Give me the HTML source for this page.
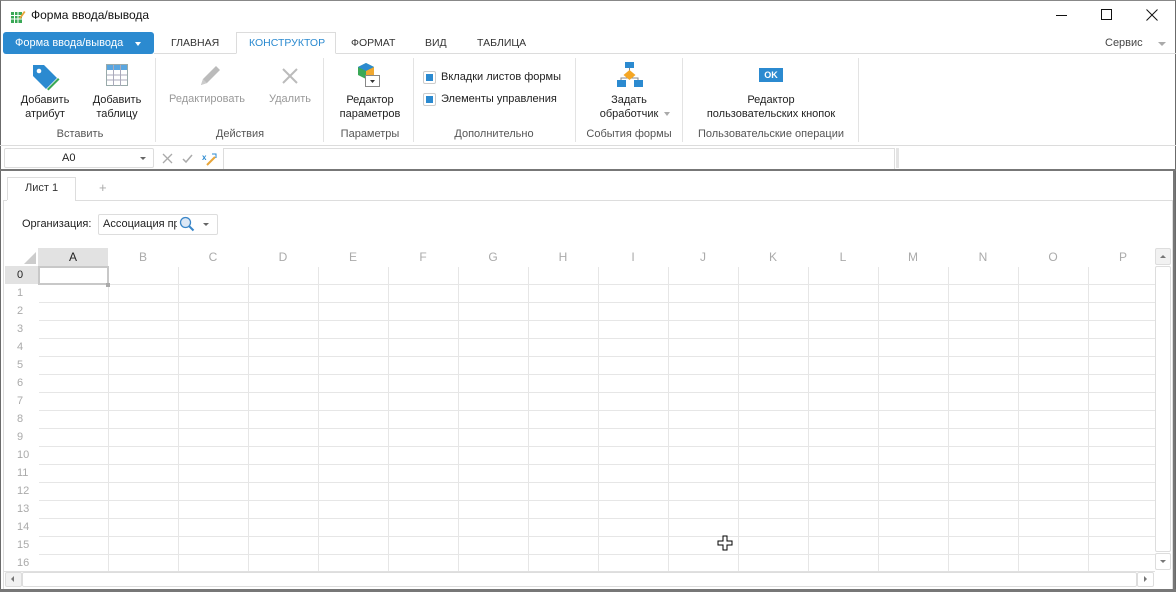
<!DOCTYPE html>
<html><head><meta charset="utf-8"><style>
*{box-sizing:border-box;margin:0;padding:0}
body{width:1176px;height:592px;position:relative;overflow:hidden;background:#fff;font-family:"Liberation Sans",sans-serif;font-size:11px;color:#222}
.a{position:absolute}
.t{position:absolute;white-space:nowrap}
.c{text-align:center}
.g{color:#999}
.lbl{color:#555;font-size:11px}
.tab{font-size:10.5px}
.sep{position:absolute;top:58px;width:1px;height:84px;background:#e3e3e3}
.cl{position:absolute;top:250px;width:70px;text-align:center;color:#aaa;font-size:12px}
.rl{position:absolute;left:4px;width:34px;padding-left:13px;color:#aaa;font-size:11px}
</style></head><body>
<div class="a" style="left:0;top:0;width:1176px;height:592px;border:1px solid #6b6b6b;border-top-color:#888"></div>
<svg class="a" style="left:10px;top:9px" width="16" height="15" viewBox="0 0 16 15"><rect x="1" y="3" width="11" height="11" fill="#3aa856"/><path d="M1 6.5h11M1 10h11M4.5 3v11M8 3v11" stroke="#fff" stroke-width="1"/><path d="M9 9l5-7 1.5 1-5 7z" fill="#e8a53a"/></svg>
<div class="t" style="left:31px;top:8px;font-size:12px;color:#111">Форма ввода/вывода</div>
<div class="a" style="left:1056px;top:15px;width:11px;height:1px;background:#111"></div>
<div class="a" style="left:1101px;top:9px;width:11px;height:11px;border:1px solid #111"></div>
<svg class="a" style="left:1146px;top:9px" width="12" height="12"><path d="M0.5 0.5l11 11M11.5 0.5l-11 11" stroke="#111"/></svg>
<div class="a" style="left:3px;top:32px;width:151px;height:22px;background:#2b8ad0;border-radius:3px"></div>
<div class="t tab" style="left:15px;top:37px;color:#fff;font-size:11px">Форма ввода/вывода</div>
<div class="a" style="left:135px;top:42px;border-left:3px solid transparent;border-right:3px solid transparent;border-top:4px solid #fff"></div>
<div class="a" style="left:154px;top:53px;width:1022px;height:1px;background:#dcdcdc"></div>
<div class="a" style="left:236px;top:32px;width:100px;height:22px;border:1px solid #dcdcdc;border-bottom:1px solid #fff;background:#fff"></div>
<div class="t tab" style="left:171px;top:37px;color:#333">ГЛАВНАЯ</div>
<div class="t tab" style="left:249px;top:37px;color:#2b8ad0">КОНСТРУКТОР</div>
<div class="t tab" style="left:351px;top:37px;color:#333">ФОРМАТ</div>
<div class="t tab" style="left:425px;top:37px;color:#333">ВИД</div>
<div class="t tab" style="left:477px;top:37px;color:#333">ТАБЛИЦА</div>
<div class="t" style="left:1105px;top:37px;color:#444">Сервис</div>
<div class="a" style="left:1158px;top:42px;border-left:4px solid transparent;border-right:4px solid transparent;border-top:4px solid #aaa"></div>
<svg class="a" style="left:30px;top:62px" width="30" height="30" viewBox="0 0 30 30"><path d="M3 3h11l13 13-11 11L3 14z" fill="#2b8ad0"/><circle cx="9" cy="9" r="2.3" fill="#fff"/><path d="M17 27l11-11 1.5 1.5-11 11z" fill="#3aa856"/></svg>
<svg class="a" style="left:106px;top:64px" width="22" height="22"><rect x="0.5" y="0.5" width="21" height="21" fill="#fff" stroke="#9aa"/><rect x="1" y="1" width="20" height="5" fill="#5aa6e0"/><path d="M1 11h20M1 16h20M7.5 1v21M14.5 1v21" stroke="#aab" /></svg>
<div class="t c" style="left:10px;top:93px;width:70px;line-height:14px">Добавить<br>атрибут</div>
<div class="t c" style="left:82px;top:93px;width:70px;line-height:14px">Добавить<br>таблицу</div>
<div class="t c lbl" style="left:10px;top:128px;width:140px">Вставить</div>
<div class="sep" style="left:155px"></div>
<svg class="a" style="left:198px;top:63px" width="25" height="25"><path d="M3 22l2-6L18 3l4 4L9 20z" fill="#bbb"/><path d="M3 22l2-6 4 4z" fill="#ccc"/></svg>
<svg class="a" style="left:282px;top:68px" width="16" height="16"><path d="M1 1l14 14M15 1L1 15" stroke="#bbb" stroke-width="2"/></svg>
<div class="t g" style="left:169px;top:93px">Редактировать</div>
<div class="t g" style="left:269px;top:93px">Удалить</div>
<div class="t c lbl" style="left:160px;top:128px;width:160px">Действия</div>
<div class="sep" style="left:323px"></div>
<svg class="a" style="left:356px;top:62px" width="30" height="28"><path d="M10 1l8 4v8l-8 4-8-4V5z" fill="#3aa856"/><path d="M10 1l8 4-8 4-8-4z" fill="#2b8ad0"/><path d="M10 9l8-4v8l-8 4z" fill="#f0a830"/><rect x="9.5" y="13.5" width="14" height="11" fill="#fff" stroke="#888"/><path d="M14 18h5l-2.5 3z" fill="#333"/></svg>
<div class="t c" style="left:333px;top:93px;width:74px;line-height:14px">Редактор<br>параметров</div>
<div class="t c lbl" style="left:333px;top:128px;width:74px">Параметры</div>
<div class="sep" style="left:413px"></div>
<div class="a" style="left:423px;top:71px;width:13px;height:13px;border:1px solid #ccc;border-radius:2px"></div><div class="a" style="left:426px;top:74px;width:7px;height:7px;background:#2b8ad0"></div>
<div class="a" style="left:423px;top:93px;width:13px;height:13px;border:1px solid #ccc;border-radius:2px"></div><div class="a" style="left:426px;top:96px;width:7px;height:7px;background:#2b8ad0"></div>
<div class="t" style="left:441px;top:71px">Вкладки листов формы</div>
<div class="t" style="left:441px;top:93px">Элементы управления</div>
<div class="t c lbl" style="left:416px;top:128px;width:156px">Дополнительно</div>
<div class="sep" style="left:575px"></div>
<svg class="a" style="left:617px;top:62px" width="26" height="26"><rect x="8" y="0" width="9" height="6" fill="#2b8ad0"/><path d="M12.5 6v4M4 19v-3h17v3" stroke="#888" fill="none"/><path d="M12.5 8l6 5-6 5-6-5z" fill="#f5a623"/><rect x="0" y="18" width="9" height="7" fill="#2b8ad0"/><rect x="17" y="18" width="9" height="7" fill="#2b8ad0"/></svg>
<div class="t c" style="left:585px;top:93px;width:88px;line-height:14px">Задать<br>обработчик</div>
<div class="a" style="left:664px;top:112px;border-left:3px solid transparent;border-right:3px solid transparent;border-top:4px solid #aaa"></div>
<div class="t c lbl" style="left:579px;top:128px;width:100px">События формы</div>
<div class="sep" style="left:682px"></div>
<div class="a" style="left:759px;top:68px;width:24px;height:14px;background:#2b8ad0;color:#fff;font-size:9px;font-weight:bold;text-align:center;line-height:14px">OK</div>
<div class="t c" style="left:685px;top:93px;width:172px;line-height:14px">Редактор<br>пользовательских кнопок</div>
<div class="t c lbl" style="left:685px;top:128px;width:172px">Пользовательские операции</div>
<div class="sep" style="left:858px"></div>
<div class="a" style="left:0;top:145px;width:1176px;height:1px;background:#dcdcdc"></div>
<div class="a" style="left:4px;top:148px;width:150px;height:20px;border:1px solid #ddd;border-radius:2px"></div>
<div class="t" style="left:62px;top:152px">A0</div>
<div class="a" style="left:140px;top:157px;border-left:3px solid transparent;border-right:3px solid transparent;border-top:3px solid #666"></div>
<svg class="a" style="left:162px;top:152px" width="60" height="14"><path d="M1 2l9 9M10 2l-9 9" stroke="#aaa" stroke-width="1.3"/><path d="M21 7l3 3 6-7" stroke="#aaa" stroke-width="1.5" fill="none"/><text x="40" y="8" font-size="8" fill="#2b8ad0" font-family="Liberation Sans" font-weight="bold">x</text><path d="M45 13l8-8" stroke="#e8a53a" stroke-width="2"/><path d="M50 2h4v4" stroke="#2b8ad0" fill="none"/></svg>
<div class="a" style="left:223px;top:148px;width:672px;height:21px;border:1px solid #ddd;border-bottom:none"></div>
<div class="a" style="left:896px;top:148px;width:3px;height:20px;background:#e4e4e4"></div>
<div class="a" style="left:0;top:169px;width:1176px;height:2px;background:#777"></div>
<div class="a" style="left:7px;top:177px;width:69px;height:24px;border:1px solid #ddd;border-bottom:none;background:#fff"></div>
<div class="t" style="left:25px;top:182px;color:#333">Лист 1</div>
<div class="t" style="left:99px;top:180px;color:#aaa;font-size:13px">+</div>
<div class="a" style="left:3px;top:200px;width:1170px;height:390px;border:1px solid #ddd"></div>
<div class="a" style="left:7px;top:200px;width:68px;height:1px;background:#fff"></div>
<div class="t" style="left:22px;top:218px;color:#222">Организация:</div>
<div class="a" style="left:98px;top:214px;width:120px;height:21px;border:1px solid #ddd;border-radius:2px"></div>
<div class="t" style="left:103px;top:218px;width:74px;overflow:hidden">Ассоциация пр</div>
<svg class="a" style="left:179px;top:216px" width="16" height="16"><circle cx="6.5" cy="6.5" r="5" fill="#dde8f5" stroke="#3a86c8" stroke-width="1.3"/><path d="M10 10l4.5 4.5" stroke="#3a86c8" stroke-width="2"/></svg>
<div class="a" style="left:203px;top:223px;border-left:3px solid transparent;border-right:3px solid transparent;border-top:3px solid #666"></div>
<div class="a" style="left:24px;top:252px;width:0;height:0;border-left:12px solid transparent;border-bottom:12px solid #ccc"></div>
<div class="a" style="left:38px;top:248px;width:70px;height:18px;background:#e2e2e2"></div>
<div class="a" style="left:5px;top:266px;width:33px;height:18px;background:#e2e2e2"></div>
<div class="a" style="left:39px;top:267px;width:1116px;height:304px;background-image:linear-gradient(to right,transparent 69px,#e6e6e6 69px),linear-gradient(to bottom,transparent 17px,#e6e6e6 17px);background-size:70px 100%,100% 18px"></div>
<div class="a" style="left:38px;top:266px;width:71px;height:19px;border:2px solid #c8c8c8"></div>
<div class="a" style="left:106px;top:283px;width:4px;height:4px;background:#aaa"></div>
<div class="cl" style="left:38px;color:#222">A</div><div class="cl" style="left:108px">B</div><div class="cl" style="left:178px">C</div><div class="cl" style="left:248px">D</div><div class="cl" style="left:318px">E</div><div class="cl" style="left:388px">F</div><div class="cl" style="left:458px">G</div><div class="cl" style="left:528px">H</div><div class="cl" style="left:598px">I</div><div class="cl" style="left:668px">J</div><div class="cl" style="left:738px">K</div><div class="cl" style="left:808px">L</div><div class="cl" style="left:878px">M</div><div class="cl" style="left:948px">N</div><div class="cl" style="left:1018px">O</div><div class="cl" style="left:1088px">P</div>
<div class="rl" style="top:269px;color:#222">0</div><div class="rl" style="top:287px">1</div><div class="rl" style="top:305px">2</div><div class="rl" style="top:323px">3</div><div class="rl" style="top:341px">4</div><div class="rl" style="top:359px">5</div><div class="rl" style="top:377px">6</div><div class="rl" style="top:395px">7</div><div class="rl" style="top:413px">8</div><div class="rl" style="top:431px">9</div><div class="rl" style="top:449px">10</div><div class="rl" style="top:467px">11</div><div class="rl" style="top:485px">12</div><div class="rl" style="top:503px">13</div><div class="rl" style="top:521px">14</div><div class="rl" style="top:539px">15</div><div class="rl" style="top:557px">16</div>
<div class="a" style="left:1155px;top:248px;width:16px;height:323px;background:#fff"></div>
<div class="a" style="left:1155px;top:248px;width:16px;height:17px;border:1px solid #ddd;border-radius:2px;background:#f2f2f2"></div>
<div class="a" style="left:1160px;top:255px;border-left:3px solid transparent;border-right:3px solid transparent;border-bottom:3px solid #777"></div>
<div class="a" style="left:1155px;top:266px;width:16px;height:286px;border:1px solid #ddd;border-radius:2px"></div>
<div class="a" style="left:1155px;top:553px;width:16px;height:17px;border:1px solid #ddd;border-radius:2px"></div>
<div class="a" style="left:1160px;top:560px;border-left:3px solid transparent;border-right:3px solid transparent;border-top:3px solid #777"></div>
<div class="a" style="left:4px;top:571px;width:1151px;height:17px;background:#fff;border-top:1px solid #e0e0e0"></div>
<div class="a" style="left:5px;top:572px;width:17px;height:15px;border:1px solid #ddd;border-radius:2px;background:#f2f2f2"></div>
<div class="a" style="left:11px;top:576px;border-top:3px solid transparent;border-bottom:3px solid transparent;border-right:3px solid #777"></div>
<div class="a" style="left:22px;top:572px;width:1115px;height:15px;border:1px solid #ddd;border-radius:2px"></div>
<div class="a" style="left:1137px;top:572px;width:17px;height:15px;border:1px solid #ddd;border-radius:2px"></div>
<div class="a" style="left:1144px;top:576px;border-top:3px solid transparent;border-bottom:3px solid transparent;border-left:3px solid #777"></div>
<div class="a" style="left:1173px;top:170px;width:2px;height:421px;background:#777"></div>
<div class="a" style="left:0;top:589px;width:1176px;height:3px;background:#777"></div>
<svg class="a" style="left:717px;top:535px" width="16" height="16"><path d="M6 1h4v5h5v4h-5v5H6v-5H1V6h5z" fill="#fff" stroke="#000"/></svg>
</body></html>
